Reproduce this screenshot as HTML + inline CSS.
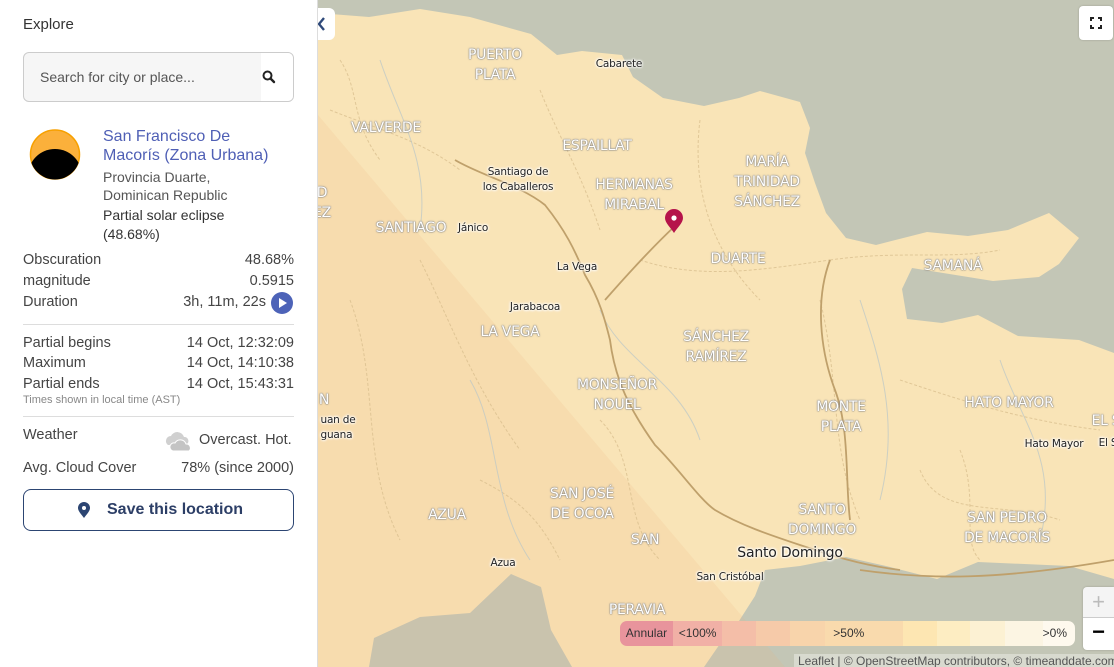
<!DOCTYPE html>
<html><head><meta charset="utf-8">
<style>
*{margin:0;padding:0;box-sizing:border-box}
body{width:1114px;height:667px;overflow:hidden;font-family:"Liberation Sans",Arial,sans-serif;position:relative;background:#c3c6b6}
#side{position:absolute;left:0;top:0;width:318px;height:667px;background:#fff;border-right:1px solid #ddd;z-index:5}
.abs{position:absolute}
.row{position:absolute;left:23px;width:271px;font-size:14.5px;color:#444;display:flex;justify-content:space-between}
#map{position:absolute;left:318px;top:0;width:796px;height:667px;overflow:hidden}
.pl{position:absolute;font-family:"DejaVu Sans","Liberation Sans",sans-serif;font-size:14px;color:#fff;text-align:center;line-height:20px;letter-spacing:-0.3px;text-shadow:0 0 1px #7a7a7a,0 0 1px #7a7a7a,0 0 2px #999;transform:translateX(-50%);white-space:nowrap}
.cl{position:absolute;font-family:"DejaVu Sans","Liberation Sans",sans-serif;font-size:10.5px;color:#222;text-align:center;line-height:15px;text-shadow:0 0 2px #fff,0 0 2px #fff,0 0 3px #fff,0 0 3px #fff;transform:translateX(-50%);white-space:nowrap;letter-spacing:-0.2px}
</style></head><body>
<div id="map">
<svg width="796" height="667" viewBox="318 0 796 667" style="position:absolute;left:0;top:0">
<rect x="318" y="0" width="796" height="667" fill="#c3c6b6"/>
<polygon fill="#f9e4b7" points="318,13 369,17 420,9 470,17 531,34 557,55 582,51 622,55 633,77 663,98 704,106 739,98 760,91 800,102 810,128 805,153 815,183 826,213 846,238 876,245 927,232 968,236 1008,230 1049,213 1079,238 1059,264 1039,277 993,281 912,268 902,289 907,319 942,323 978,315 1018,336 1079,340 1114,353 1114,579 1069,566 978,562 937,579 886,566 846,557 800,566 765,570 755,596 739,621 724,638 704,667 572,667 551,630 541,587 511,574 470,613 420,617 374,638 369,667 318,667"/>
<polygon fill="#f0b27a" opacity="0.14" points="318,115 785,667 318,667"/>
<g fill="none" stroke="#d9bf8e" stroke-width="1" stroke-dasharray="3,2" opacity="0.8">
<path d="M330,110 C380,130 420,140 460,170 M540,90 C560,140 580,170 600,230 M700,120 C690,200 720,260 760,300 M640,260 C700,280 760,270 830,260 M830,260 C900,250 950,260 1000,250 M820,300 C840,380 830,450 860,520 M900,380 C960,400 1020,420 1100,430 M420,260 C450,320 470,380 520,450 M350,300 C380,380 360,460 400,540 M600,420 C640,460 620,520 660,560 M960,450 C980,500 960,540 980,560 M340,60 C360,90 350,120 380,160 M480,480 C520,500 540,520 560,560 M920,470 C940,520 1000,500 1060,520"/>
</g>
<g fill="none" stroke="#b9c6c8" stroke-width="1" opacity="0.7">
<path d="M380,60 C400,120 430,160 420,230 M600,310 C620,360 680,380 700,440 M860,300 C880,360 900,420 880,500 M1000,360 C1020,420 1060,460 1040,540 M470,380 C500,430 490,500 530,560"/>
</g>
<g fill="none" stroke="#bfa06b" stroke-width="1.8">
<path d="M455,160 C480,175 520,185 545,205 C565,230 575,250 585,275 C600,300 605,320 610,340 C615,380 630,410 655,445 C680,470 700,500 715,510 C740,525 770,535 800,545 C830,555 860,565 900,570"/>
<path d="M830,260 C815,300 820,350 835,390 C850,430 845,480 850,520"/>
<path d="M860,570 C930,580 1000,580 1114,560"/>
<path d="M605,300 C640,260 660,240 676,225"/>
</g>
</svg>
<div class="pl" style="left:177px;top:45px">PUERTO<br>PLATA</div>
<div class="cl" style="left:301px;top:57px">Cabarete</div>
<div class="pl" style="left:68px;top:118px">VALVERDE</div>
<div class="pl" style="left:279px;top:136px">ESPAILLAT</div>
<div class="cl" style="left:200px;top:165px">Santiago de<br>los Caballeros</div>
<div class="pl" style="left:316px;top:175px">HERMANAS<br>MIRABAL</div>
<div class="pl" style="left:449px;top:152px">MARÍA<br>TRINIDAD<br>SÁNCHEZ</div>
<div class="pl" style="left:93px;top:218px">SANTIAGO</div>
<div class="cl" style="left:155px;top:221px">Jánico</div>
<div class="cl" style="left:259px;top:260px">La Vega</div>
<div class="pl" style="left:420px;top:249px">DUARTE</div>
<div class="pl" style="left:635px;top:256px">SAMANÁ</div>
<div class="cl" style="left:217px;top:300px">Jarabacoa</div>
<div class="pl" style="left:192px;top:322px">LA VEGA</div>
<div class="pl" style="left:398px;top:327px">SÁNCHEZ<br>RAMÍREZ</div>
<div class="pl" style="left:299px;top:375px">MONSEÑOR<br>NOUEL</div>
<div class="pl" style="left:523px;top:397px">MONTE<br>PLATA</div>
<div class="pl" style="left:691px;top:393px">HATO MAYOR</div>
<div class="cl" style="left:736px;top:437px">Hato Mayor</div>
<div class="pl" style="left:788px;top:411px">EL S</div>
<div class="cl" style="left:790px;top:436px">El S</div>
<div class="pl" style="left:264px;top:484px">SAN JOSÉ<br>DE OCOA</div>
<div class="pl" style="left:129px;top:505px">AZUA</div>
<div class="pl" style="left:504px;top:500px">SANTO<br>DOMINGO</div>
<div class="pl" style="left:689px;top:508px">SAN PEDRO<br>DE MACORÍS</div>
<div class="pl" style="left:327px;top:530px">SAN</div>
<div class="cl" style="left:472px;top:544px;font-size:14px;line-height:18px">Santo Domingo</div>
<div class="cl" style="left:185px;top:556px">Azua</div>
<div class="cl" style="left:412px;top:570px">San Cristóbal</div>
<div class="pl" style="left:319px;top:600px">PERAVIA</div>
<div class="pl" style="left:4px;top:183px">D<br>EZ</div>
<div class="pl" style="left:6px;top:390px">N</div>
<div class="cl" style="left:20px;top:413px;text-align:left">uan de<br>guana</div>
<svg class="abs" style="left:346px;top:208px" width="20" height="26" viewBox="0 0 20 26"><path d="M10,25 C7,20 1,15 1,10 A9,9 0 0 1 19,10 C19,15 13,20 10,25Z" fill="#b5134a"/><circle cx="10" cy="10" r="2.6" fill="#fff"/></svg>
<div class="abs" style="left:761px;top:6px;width:34px;height:34px;background:#fff;border-radius:4px;box-shadow:0 0 2px rgba(0,0,0,.2)"><svg width="34" height="34" viewBox="0 0 34 34"><path d="M12,15V12H15M19,12H22V15M22,19V22H19M15,22H12V19" fill="none" stroke="#222" stroke-width="2"/></svg></div>
<div class="abs" style="left:0;top:8px;width:17px;height:32px;background:#fff;border-radius:0 6px 6px 0"><svg width="17" height="32"><path d="M6,10 L1,16 L6,22" fill="none" stroke="#2f4a7a" stroke-width="2.4"/></svg></div>
<div class="abs" style="left:302px;top:621px;width:455px;height:25px;border-radius:7px;overflow:hidden;display:flex;font-size:12px;color:#333;line-height:25px">
<div style="width:57px;background:#e8949c;text-align:center">Annular</div>
<div style="width:53px;background:#f1b0a6;text-align:center">&lt;100%</div>
<div style="width:36px;background:#f4bea8"></div>
<div style="width:37px;background:#f6caa9"></div>
<div style="width:38px;background:#f8d4ab"></div>
<div style="width:84px;background:#f9daad;text-align:center;position:relative"><span style="position:absolute;left:8px">&gt;50%</span></div>
<div style="width:36px;background:#fde6b2"></div>
<div style="width:36px;background:#fdedc2"></div>
<div style="width:37px;background:#fcf1d3"></div>
<div style="width:41px;background:#fcf5e3"></div>
<div style="flex:1;background:#fef9ee;text-align:right;padding-right:8px">&gt;0%</div>
</div>
<div class="abs" style="left:765px;top:587px;width:31px;height:63px;border-radius:4px 0 0 4px;overflow:hidden;box-shadow:0 0 2px rgba(0,0,0,.2)">
<div style="height:31px;background:#f4f4f4;color:#bbb;font-size:22px;text-align:center;line-height:30px;border-bottom:1px solid #ccc">+</div>
<div style="height:32px;background:#fff;color:#000;font-size:22px;font-weight:bold;text-align:center;line-height:28px">−</div>
</div>
<div class="abs" style="left:476px;top:654px;width:330px;height:13px;background:rgba(255,255,255,.35);font-size:12px;color:#555;line-height:15px;padding-left:4px;white-space:nowrap">Leaflet | © OpenStreetMap contributors, © timeanddate.com</div>
</div>

<div id="side">
<div class="abs" style="left:23px;top:16px;font-size:15px;color:#333">Explore</div>
<div class="abs" style="left:23px;top:52px;width:271px;height:50px;border:1px solid #ccc;border-radius:6px;background:#f6f6f6;overflow:hidden">
<div class="abs" style="left:16px;top:16px;font-size:14px;color:#555">Search for city or place...</div>
<div class="abs" style="right:0;top:0;width:32px;height:48px;background:#fff"></div>
<svg class="abs" style="left:238px;top:17px" width="14" height="14" viewBox="0 0 14 14"><circle cx="5.5" cy="5.5" r="4" fill="none" stroke="#222" stroke-width="2"/><path d="M8.5,8.5 L12,12" stroke="#222" stroke-width="2.4" stroke-linecap="round"/></svg>
</div>
<svg class="abs" style="left:28px;top:128px" width="54" height="54" viewBox="0 0 54 54"><defs><clipPath id="c"><circle cx="27" cy="26.5" r="25"/></clipPath></defs><circle cx="27" cy="26.5" r="24.5" fill="#fbb03b" stroke="#f7a000" stroke-width="1.5"/><circle cx="27" cy="48" r="27" fill="#000" clip-path="url(#c)"/></svg>
<div class="abs" style="left:103px;top:127px;font-size:16px;line-height:19px;color:#4f5fb5">San Francisco De<br>Macorís (Zona Urbana)</div>
<div class="abs" style="left:103px;top:168px;font-size:14px;line-height:18px;color:#555">Provincia Duarte,<br>Dominican Republic</div>
<div class="abs" style="left:103px;top:206px;font-size:14px;line-height:19px;color:#333">Partial solar eclipse<br>(48.68%)</div>
<div class="row" style="top:252px"><span>Obscuration</span><span>48.68%</span></div>
<div class="row" style="top:273px"><span>magnitude</span><span>0.5915</span></div>
<div class="row" style="top:294px"><span>Duration</span><span style="padding-right:28px">3h, 11m, 22s</span></div>
<svg class="abs" style="left:271px;top:292px" width="22" height="22"><circle cx="11" cy="11" r="11" fill="#4d63b8"/><path d="M8,6 L16,11 L8,16Z" fill="#fff"/></svg>
<div class="abs" style="left:23px;top:324px;width:271px;height:1px;background:#ddd"></div>
<div class="row" style="top:335px"><span>Partial begins</span><span>14 Oct, 12:32:09</span></div>
<div class="row" style="top:355px"><span>Maximum</span><span>14 Oct, 14:10:38</span></div>
<div class="row" style="top:376px"><span>Partial ends</span><span>14 Oct, 15:43:31</span></div>
<div class="abs" style="left:23px;top:394px;font-size:11px;color:#888">Times shown in local time (AST)</div>
<div class="abs" style="left:23px;top:416px;width:271px;height:1px;background:#ddd"></div>
<div class="row" style="top:427px"><span>Weather</span><span></span></div>
<svg class="abs" style="left:163px;top:429px" width="30" height="24" viewBox="0 0 30 24"><path d="M5,16 A5,5 0 0 1 8,7 A7,7 0 0 1 21,8 A4,4 0 0 1 24,15 Z" fill="#d0d0d0"/><path d="M10,22 A4,4 0 0 1 12,14 A6,6 0 0 1 23,15 A4,4 0 0 1 26,22Z" fill="#c4c4c4" stroke="#fff" stroke-width="1"/></svg>
<div class="abs" style="left:199px;top:432px;font-size:14.5px;color:#444">Overcast. Hot.</div>
<div class="row" style="top:460px"><span>Avg. Cloud Cover</span><span>78% (since 2000)</span></div>
<div class="abs" style="left:23px;top:489px;width:271px;height:42px;border:1.5px solid #2c4572;border-radius:8px"></div>
<svg class="abs" style="left:77px;top:501px" width="14" height="18" viewBox="0 0 14 18"><path d="M7,17 C4,13 1,10 1,7 A6,6 0 0 1 13,7 C13,10 10,13 7,17Z" fill="#2c4572"/><circle cx="7" cy="7" r="2" fill="#fff"/></svg>
<div class="abs" style="left:107px;top:501px;font-size:16px;font-weight:bold;color:#2c3e66">Save this location</div>
</div>
</body></html>
